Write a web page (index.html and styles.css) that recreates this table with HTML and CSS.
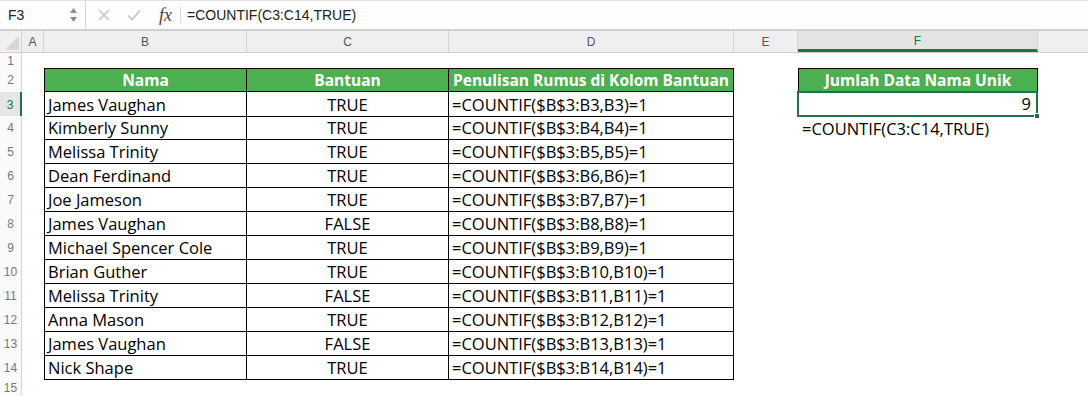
FILE: index.html
```html
<!DOCTYPE html>
<html>
<head>
<meta charset="utf-8">
<link rel="stylesheet" href="styles.css">
</head>
<body>
<div class="app">
  <div class="fbar">
    <div class="namebox">
      <span class="nb-text">F3</span>
      <svg class="spin" width="9" height="16" viewBox="0 0 9 16"><path d="M1 6 L4.5 1 L8 6 Z" fill="#8a8a8a"/><path d="M1 10 L4.5 15 L8 10 Z" fill="#8a8a8a"/></svg>
    </div>
    <div class="fbtns">
      <svg width="12" height="12" viewBox="0 0 12 12"><path d="M1 1 L11 11 M11 1 L1 11" stroke="#c4c4c4" stroke-width="1.6" fill="none"/></svg>
      <svg width="14" height="12" viewBox="0 0 14 12"><path d="M1 6.5 L5 10.5 L13 1.5" stroke="#c4c4c4" stroke-width="1.6" fill="none"/></svg>
      <span class="fx">fx</span>
    </div>
    <div class="formula">=COUNTIF(C3:C14,TRUE)</div>
  </div>

  <div class="sheet">
    <div class="row colhdr">
      <div class="corner"><svg width="14" height="14" viewBox="0 0 14 14"><path d="M14 0 L14 14 L0 14 Z" fill="#d6d6d6"/></svg></div>
      <div class="ch">A</div>
      <div class="ch">B</div>
      <div class="ch">C</div>
      <div class="ch">D</div>
      <div class="ch">E</div>
      <div class="ch sel">F</div>
      <div class="ch last"></div>
    </div>

    <div class="row short"><div class="rh">1</div></div>

    <div class="row">
      <div class="rh">2</div>
      <div class="cell b t hdr first">Nama</div>
      <div class="cell c t hdr">Bantuan</div>
      <div class="cell d t hdr">Penulisan Rumus di Kolom Bantuan</div>
      <div class="cell f t hdr first">Jumlah Data Nama Unik</div>
    </div>

    <div class="row">
      <div class="rh active">3</div>
      <div class="cell b t">James Vaughan</div>
      <div class="cell c t ctr">TRUE</div>
      <div class="cell d t">=COUNTIF($B$3:B3,B3)=1</div>
      <div class="cell f selcell">9<span class="handle"></span></div>
    </div>

    <div class="row">
      <div class="rh">4</div>
      <div class="cell b t">Kimberly Sunny</div>
      <div class="cell c t ctr">TRUE</div>
      <div class="cell d t">=COUNTIF($B$3:B4,B4)=1</div>
      <div class="cell f note">=COUNTIF(C3:C14,TRUE)</div>
    </div>

    <div class="row">
      <div class="rh">5</div>
      <div class="cell b t">Melissa Trinity</div>
      <div class="cell c t ctr">TRUE</div>
      <div class="cell d t">=COUNTIF($B$3:B5,B5)=1</div>
    </div>

    <div class="row">
      <div class="rh">6</div>
      <div class="cell b t">Dean Ferdinand</div>
      <div class="cell c t ctr">TRUE</div>
      <div class="cell d t">=COUNTIF($B$3:B6,B6)=1</div>
    </div>

    <div class="row">
      <div class="rh">7</div>
      <div class="cell b t">Joe Jameson</div>
      <div class="cell c t ctr">TRUE</div>
      <div class="cell d t">=COUNTIF($B$3:B7,B7)=1</div>
    </div>

    <div class="row">
      <div class="rh">8</div>
      <div class="cell b t">James Vaughan</div>
      <div class="cell c t ctr">FALSE</div>
      <div class="cell d t">=COUNTIF($B$3:B8,B8)=1</div>
    </div>

    <div class="row">
      <div class="rh">9</div>
      <div class="cell b t">Michael Spencer Cole</div>
      <div class="cell c t ctr">TRUE</div>
      <div class="cell d t">=COUNTIF($B$3:B9,B9)=1</div>
    </div>

    <div class="row">
      <div class="rh">10</div>
      <div class="cell b t">Brian Guther</div>
      <div class="cell c t ctr">TRUE</div>
      <div class="cell d t">=COUNTIF($B$3:B10,B10)=1</div>
    </div>

    <div class="row">
      <div class="rh">11</div>
      <div class="cell b t">Melissa Trinity</div>
      <div class="cell c t ctr">FALSE</div>
      <div class="cell d t">=COUNTIF($B$3:B11,B11)=1</div>
    </div>

    <div class="row">
      <div class="rh">12</div>
      <div class="cell b t">Anna Mason</div>
      <div class="cell c t ctr">TRUE</div>
      <div class="cell d t">=COUNTIF($B$3:B12,B12)=1</div>
    </div>

    <div class="row">
      <div class="rh">13</div>
      <div class="cell b t">James Vaughan</div>
      <div class="cell c t ctr">FALSE</div>
      <div class="cell d t">=COUNTIF($B$3:B13,B13)=1</div>
    </div>

    <div class="row">
      <div class="rh">14</div>
      <div class="cell b t">Nick Shape</div>
      <div class="cell c t ctr">TRUE</div>
      <div class="cell d t">=COUNTIF($B$3:B14,B14)=1</div>
    </div>

    <div class="row short">
      <div class="rh">15</div>
    </div>
  </div>
</div>
</body>
</html>
```

FILE: styles.css
```css
* { box-sizing: border-box; }
html, body { margin: 0; padding: 0; background: #ffffff; }
body { width: 1088px; height: 396px; overflow: hidden; }

.app { display: flex; flex-direction: column; }

.fbar {
  height: 31px;
  display: flex;
  align-items: stretch;
  background: #fdfdfd;
  border-top: 1px solid #e2e2e2;
  border-bottom: 2px solid #d0d0d0;
  font-family: "Liberation Sans", Arial, sans-serif;
  font-size: 14px;
  color: #222;
}
.namebox {
  width: 86px;
  display: flex;
  align-items: center;
  justify-content: space-between;
  padding: 0 7px 0 8px;
  border-right: 1px solid #d6d6d6;
}
.spin { display: block; }
.fbtns {
  width: 95px;
  display: flex;
  align-items: center;
  gap: 17px;
  padding-left: 12px;
  border-right: 1px solid #d6d6d6;
  margin: 6px 0;
}
.fx {
  font-family: "Liberation Serif", "Times New Roman", serif;
  font-style: italic;
  font-size: 18px;
  color: #444;
  margin-left: 1px;
}
.formula {
  display: flex;
  align-items: center;
  padding-left: 6px;
}

.sheet {
  font-family: "Open Sans", "Lato", sans-serif;
}
.row {
  display: grid;
  grid-template-columns: 22px 22px 203px 202px 285px 64px 240px 1fr;
  height: 24px;
}
.short { height: 15px; }

.colhdr {
  height: 22px;
  background: #efefef;
  border-bottom: 1px solid #cfcfcf;
  font-family: "Liberation Sans", Arial, sans-serif;
  font-size: 12px;
  color: #555;
}
.corner {
  display: flex;
  align-items: flex-end;
  justify-content: flex-end;
  padding: 0 2px 2px 0;
  border-right: 1px solid #d4d4d4;
}
.corner svg { display: block; }
.ch {
  display: flex;
  align-items: center;
  justify-content: center;
  border-right: 1px solid #d4d4d4;
}
.ch.last { border-right: none; }
.ch.sel {
  background: #e3e3e3;
  color: #217346;
  border-bottom: 3px solid #217346;
  padding-top: 2px;
}

.rh {
  grid-column: 1;
  display: flex;
  align-items: center;
  justify-content: center;
  background: #fafafa;
  border-right: 1px solid #d4d4d4;
  font-family: "Liberation Sans", Arial, sans-serif;
  font-size: 12px;
  color: #777;
}
.rh.active {
  background: #e6e6e6;
  color: #217346;
  border-right: 2px solid #217346;
}

.cell {
  display: flex;
  align-items: flex-end;
  padding: 0 3px 0 3px;
  font-size: 16.5px;
  color: #000;
  white-space: nowrap;
  line-height: 22px;
}
.b { grid-column: 3; }
.c { grid-column: 4; }
.d { grid-column: 5; }
.f { grid-column: 7; }

.t {
  border-right: 1px solid #000;
  border-bottom: 1px solid #000;
}
.b.t { border-left: 1px solid #000; }
.hdr {
  border-top: 1px solid #000;
  background: #4caf50;
  color: #fff;
  font-weight: bold;
  font-size: 15.5px;
  justify-content: center;
  align-items: center;
  padding: 0 2px;
}
.f.hdr { border-left: 1px solid #000; }
.ctr { justify-content: center; }

.selcell {
  position: relative;
  justify-content: flex-end;
  padding-right: 5px;
  border: 2px solid #217346;
  margin: -1px 0 0 -1px;
}
.handle {
  position: absolute;
  right: -4px;
  bottom: -4px;
  width: 6px;
  height: 6px;
  background: #217346;
  border: 1px solid #fff;
}
.note { padding-left: 4px; overflow: visible; }
```
